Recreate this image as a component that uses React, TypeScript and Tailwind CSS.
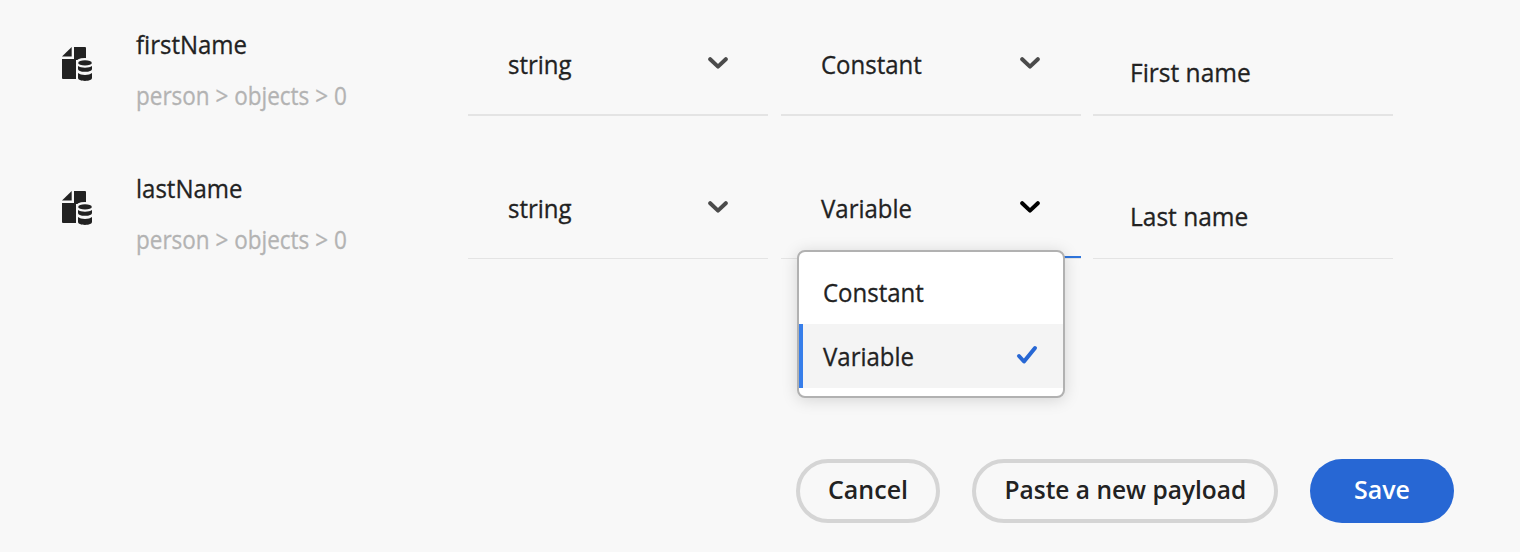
import type { ReactNode } from "react";

function FileDataIcon() {
  return (
    <svg viewBox="0 0 32 36" className="h-9 w-8" aria-hidden="true">
      <path fill="#222" d="M1 10.4 10.7 1v9.4z" />
      <path fill="#222" d="M13 1h11a1 1 0 0 1 1 1v12H15v19H2a1 1 0 0 1-1-1V13h12z" />
      <path
        fill="#f8f8f8"
        stroke="#f8f8f8"
        strokeWidth="4"
        d="M17 17c0-1.800 3.100-3 7-3s7 1.200 7 3v17H17z"
      />
      <ellipse cx="24" cy="16.900" rx="6.800" ry="2.600" fill="#222" />
      <path fill="#222" d="M17 20c1.500 1.100 4 1.700 7 1.700s5.500-.6 7-1.700v2.900c0 1.700-3.100 2.900-7 2.900s-7-1.200-7-2.900z" />
      <path fill="#222" d="M17 27c1.500 1.300 4 2 7 2s5.500-.7 7-2v5c0 1.700-3.100 2.900-7 2.900s-7-1.200-7-2.900z" />
    </svg>
  );
}

function Chevron({ className }: { className: string }) {
  return (
    <svg viewBox="0 0 20 12" className={"h-3 w-5 " + className} aria-hidden="true">
      <path d="M2.200 2.200 10 9.600l7.800-7.400" fill="none" stroke="currentColor" strokeWidth="4" strokeLinecap="round" strokeLinejoin="round" />
    </svg>
  );
}

function Label({ scale = "scale-x-[0.96]", children }: { scale?: string; children: ReactNode }) {
  return (
    <span className={"inline-block origin-left whitespace-nowrap [-webkit-text-stroke:0.3px_currentColor] " + scale}>
      {children}
    </span>
  );
}

function Select({ value, open, line, arrow }: { value: string; open?: boolean; line: string; arrow: string }) {
  return (
    <button className={"flex w-[300px] items-start justify-between pt-12 pl-[39.5px] " + arrow + " " + line}>
      <Label>{value}</Label>
      <Chevron className={open ? "mt-[9px] text-black" : "mt-[9px] text-[#4b4b4b]"} />
    </button>
  );
}

function FieldRow({ name, kind, label, open, line, children }: {
  name: string; kind: string; label: string; open?: boolean; line: string; children?: ReactNode;
}) {
  return (
    <div className="flex h-[116px] items-start pl-[61px]">
      <div className="w-[75px] pt-[46px]"><FileDataIcon /></div>
      <div className="w-[332px] pt-7">
        <div><Label>{name}</Label></div>
        <div className="mt-[19px] text-[#b3b3b3]"><Label scale="scale-x-90">person &gt; objects &gt; 0</Label></div>
      </div>
      <Select value="string" line={line} arrow="pr-10" />
      <div className="relative ml-[13px]">
        <Select value={kind} open={open} line={line} arrow="pr-[41px]" />
        {children}
      </div>
      <div className={"ml-3 w-[300px] pt-14 pl-[37px] " + line}><Label scale="scale-x-[0.98]">{label}</Label></div>
    </div>
  );
}

export default function App() {
  return (
    <main className="flex h-[552px] w-[1520px] flex-col overflow-hidden bg-[#f8f8f8] font-['Open_Sans',sans-serif] text-[25px] leading-8 text-[#222]">
      <FieldRow name="firstName" kind="Constant" label="First name" line="h-[116px] border-b-2 border-[#e4e4e4]" />
      <div className="mt-7">
        <FieldRow name="lastName" kind="Variable" label="Last name" open line="h-[115px] border-b border-[#e4e4e4]">
          <div className="absolute top-28 right-0 left-5 h-0.5 bg-[#2f75dc]" />
          <div className="absolute top-[106px] left-4 h-[148px] w-[268px] rounded-lg border-2 border-[#b1b1b1] bg-white pt-2 shadow-[0_2px_16px_rgba(0,0,0,0.15)]">
            <div className="flex h-16 items-center pl-[23.5px]"><Label>Constant</Label></div>
            <div className="flex h-16 items-center justify-between border-l-4 border-[#377eea] bg-[#f4f4f4] pr-[25px] pl-[19.5px]">
              <Label>Variable</Label>
              <svg viewBox="0 0 22 20" className="mb-0.5 h-5 w-[22px] text-[#2767d4]" aria-hidden="true">
                <path d="m3 11 5 5.500L19 3" fill="none" stroke="currentColor" strokeWidth="4" strokeLinecap="round" strokeLinejoin="round" />
              </svg>
            </div>
          </div>
        </FieldRow>
      </div>
      <div className="mt-[199px] flex gap-8 pl-[796px] font-semibold">
        <button className="h-16 w-36 rounded-full border-4 border-[#d5d5d5] pb-1">Cancel</button>
        <button className="h-16 w-[306px] rounded-full border-4 border-[#d5d5d5] pb-1">
          <span className="inline-block scale-x-[0.98] whitespace-nowrap">Paste a new payload</span>
        </button>
        <button className="h-16 w-36 rounded-full bg-[#2767d4] pb-1 text-white">Save</button>
      </div>
    </main>
  );
}
